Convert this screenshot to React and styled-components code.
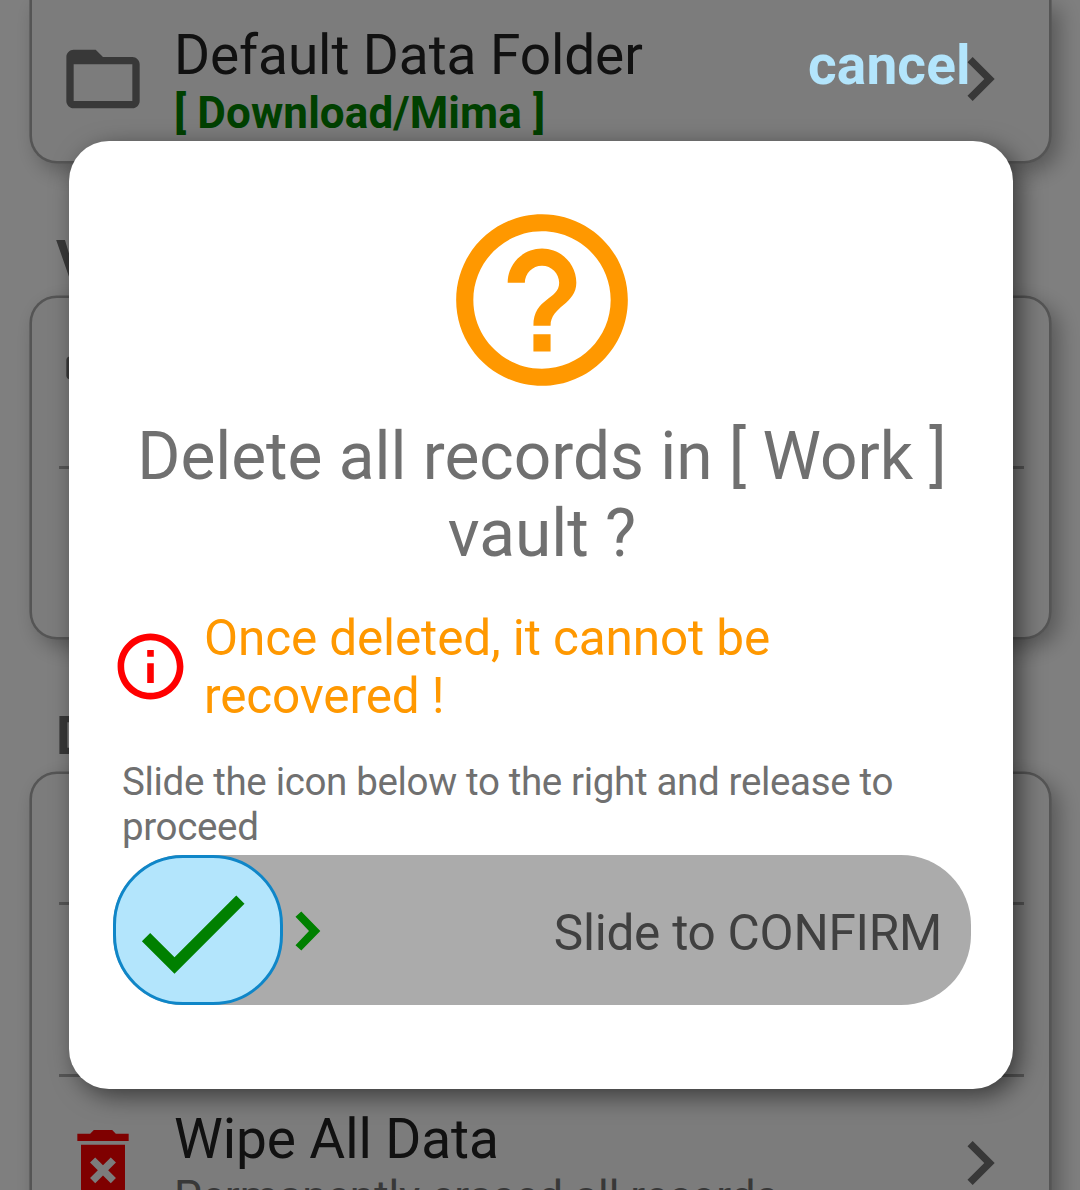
import React from "react";
import styled, { createGlobalStyle } from "styled-components";

const GlobalStyle = createGlobalStyle`
  * { box-sizing: border-box; }
  html, body { margin: 0; height: 100%; overflow: hidden; }
  body { font-family: Roboto, "Liberation Sans", sans-serif; background: #ffffff; }
`;

const Screen = styled.div`
  position: relative;
  height: 1190px;
  width: 1080px;
  overflow: hidden;
  background: #ffffff;
`;

const Settings = styled.main`
  display: flex;
  flex-direction: column;
  padding: 0 29px 0 30px;
`;

const SectionTitle = styled.h2`
  margin: 0;
  height: 133px;
  padding: 65px 0 0 26px;
  font-size: 54px;
  line-height: 63px;
  font-weight: 700;
  color: #707070;
`;

const Card = styled.section`
  display: flex;
  flex-direction: column;
  justify-content: ${(p) => (p.$clippedTop ? "flex-end" : "flex-start")};
  flex: none;
  height: ${(p) => p.$height}px;
  padding-bottom: ${(p) => (p.$clippedTop ? 1 : 0)}px;
  border: 2px solid #aaaaaa;
  border-top-width: ${(p) => (p.$clippedTop ? 0 : 2)}px;
  border-radius: ${(p) => (p.$clippedTop ? "0 0 27px 27px" : "27px")};
  background: #f8f8f8;
  box-shadow: 0 0 0 0.6px #aaaaaa, 8px 8px 22px rgba(0, 0, 0, 0.32);
`;

const Row = styled.div`
  display: flex;
  align-items: center;
  flex: none;
  height: ${(p) => p.$height || 168}px;
  padding: 6px 25px 0 27px;
`;

const Divider = styled.hr`
  flex: none;
  width: 965px;
  height: 3px;
  margin: 0 0 0 27px;
  border: 0;
  background: #aaaaaa;
`;

const RowText = styled.div`
  flex: 1;
  margin: 4px 0 0 27px;
  white-space: nowrap;
`;

const RowTitle = styled.div`
  font-size: 55px;
  line-height: 64px;
  letter-spacing: -0.1px;
  color: #222222;
`;

const RowNote = styled.div`
  font-size: 44px;
  line-height: 52px;
  letter-spacing: ${(p) => (p.$path ? 0.1 : 0)}px;
  font-weight: ${(p) => (p.$path ? 700 : 400)};
  color: ${(p) => (p.$path ? "#008000" : "#707070")};
`;

const Icon = styled.svg`
  display: block;
  flex: none;
  width: ${(p) => p.$size}px;
  height: ${(p) => p.$size}px;
  fill: ${(p) => p.$color || "#707070"};
`;

const Scrim = styled.div`
  position: absolute;
  inset: 0;
  background: rgba(0, 0, 0, 0.5);
`;

const Cancel = styled.button`
  position: absolute;
  top: 33px;
  left: 808px;
  padding: 0;
  border: 0;
  background: none;
  font: 700 55px/64px Roboto, "Liberation Sans", sans-serif;
  letter-spacing: 0.15px;
  color: #b3e5fc;
`;

const Dialog = styled.div`
  position: absolute;
  top: 141px;
  left: 69px;
  width: 944px;
  height: 948px;
  display: flex;
  flex-direction: column;
  padding: 56px 42px 0 44px;
  border-radius: 40px;
  background: #ffffff;
  box-shadow: 7px 7px 24px rgba(0, 0, 0, 0.53);
`;

const DialogIcon = styled.div`
  display: flex;
  justify-content: center;
  height: 221px;
`;

const Question = styled.h1`
  margin: 0 0 37px;
  font-size: 65.8px;
  line-height: 77px;
  font-weight: 400;
  letter-spacing: -0.02px;
  text-align: center;
  color: #707070;
`;

const Warning = styled.div`
  display: flex;
  align-items: center;
  gap: 14px;
  margin: 0 0 34px -2px;
  font-size: 49.5px;
  line-height: 58px;
  letter-spacing: -0.13px;
  color: #ff9800;

  svg { margin-bottom: 2px; }
`;

const Hint = styled.p`
  margin: 0 0 6px;
  padding-left: 9px;
  font-size: 38.5px;
  line-height: 45px;
  letter-spacing: -0.34px;
  color: #707070;
`;

const Track = styled.div`
  display: flex;
  align-items: center;
  height: 150px;
  border-radius: 70px;
  background: #ababab;
`;

const Thumb = styled.div`
  display: flex;
  align-items: center;
  justify-content: center;
  width: 170px;
  height: 150px;
  padding: 5px 11px 0 0;
  margin-left: -0.5px;
  border: 3px solid #0f86c8;
  border-radius: 70px;
  background: #b3e5fc;
`;

const Arrow = styled.svg`
  display: block;
  width: 26px;
  height: 40px;
  margin: 2px 0 0 12.5px;
  fill: #008000;
`;

const TrackLabel = styled.span`
  flex: 1;
  padding: 5px 29px 0 0;
  text-align: right;
  font-size: 49.5px;
  line-height: 58px;
  letter-spacing: -0.25px;
  color: #404040;
`;

const paths = {
  folder:
    "M20 6h-8l-2-2H4c-1.1 0-1.99.9-1.99 2L2 18c0 1.1.9 2 2 2h16c1.1 0 2-.9 2-2V8c0-1.1-.9-2-2-2zm0 12H4V8h16v10z",
  vault: "M3 4.2h18c.6 0 1 .4 1 1v4.2c0 .6-.4 1-1 1H3c-.6 0-1-.4-1-1V5.200c0-.6.4-1 1-1z",
  wipe:
    "M6 19c0 1.1.9 2 2 2h8c1.1 0 2-.9 2-2V7H6v12zm2.46-7.12l1.41-1.41L12 12.59l2.12-2.12 1.41 1.41L13.41 14l2.12 2.12-1.41 1.41L12 15.41l-2.12 2.12-1.41-1.41L10.59 14l-2.13-2.12zM15.5 4l-1-1h-5l-1 1H5v2h14V4z",
  chevron: "M10 6L8.59 7.41 13.17 12l-4.58 4.59L10 18l6-6z",
  help:
    "M11 18h2v-2h-2v2zm1-16C6.48 2 2 6.480 2 12s4.480 10 10 10 10-4.480 10-10S17.520 2 12 2zm0 18c-4.410 0-8-3.590-8-8s3.590-8 8-8 8 3.590 8 8-3.590 8-8 8zm0-14c-2.210 0-4 1.790-4 4h2c0-1.100.9-2 2-2s2 .9 2 2c0 2-3 1.750-3 5h2c0-2.250 3-2.500 3-5 0-2.210-1.790-4-4-4z",
  info:
    "M11 7h2v2h-2zm0 4h2v6h-2zm1-9C6.480 2 2 6.480 2 12s4.480 10 10 10 10-4.480 10-10S17.520 2 12 2zm0 18c-4.410 0-8-3.590-8-8s3.590-8 8-8 8 3.590 8 8-3.590 8-8 8z",
  check: "M9 16.17L4.83 12l-1.42 1.41L9 19 21 7l-1.41-1.41z",
};

function Glyph({ name, size = 88, color }) {
  return (
    <Icon $size={size} $color={color} viewBox="0 0 24 24" aria-hidden="true">
      <path d={paths[name]} />
    </Icon>
  );
}

function SettingRow({ icon, iconColor, title, note, path, height }) {
  return (
    <Row $height={height}>
      <Glyph name={icon} color={iconColor} />
      <RowText>
        <RowTitle>{title}</RowTitle>
        <RowNote $path={path}>{note}</RowNote>
      </RowText>
      <Glyph name="chevron" />
    </Row>
  );
}

export default function App() {
  return (
    <>
      <GlobalStyle />
      <Screen>
        <Settings>
          <Card $height={163} $clippedTop>
            <SettingRow icon="folder" title="Default Data Folder" note="[ Download/Mima ]" path />
          </Card>
          <SectionTitle>V</SectionTitle>
          <Card $height={343}>
            <Row>
              <Glyph name="vault" />
            </Row>
            <Divider />
            <Row $height={167} />
          </Card>
          <SectionTitle>D</SectionTitle>
          <Card $height={500}>
            <Row $height={128} />
            <Divider />
            <Row $height={169} />
            <Divider />
            <SettingRow
              icon="wipe"
              iconColor="#ff0000"
              title="Wipe All Data"
              note="Permanently erased all records"
              height={166}
            />
          </Card>
        </Settings>
        <Scrim />
        <Cancel>cancel</Cancel>
        <Dialog role="dialog">
          <DialogIcon>
            <Glyph name="help" size={206} color="#ff9800" />
          </DialogIcon>
          <Question>Delete all records in [ Work ] vault ?</Question>
          <Warning>
            <Glyph name="info" size={79} color="#ff0000" />
            <span>
              Once deleted, it cannot be
              <br />
              recovered !
            </span>
          </Warning>
          <Hint>Slide the icon below to the right and release to proceed</Hint>
          <Track>
            <Thumb>
              <Glyph name="check" size={140} color="#008000" />
            </Thumb>
            <Arrow viewBox="0 0 26 40" aria-hidden="true">
              <path d="M6.300.500L25.300 20 6.300 39.500.500 34.200 14 20 .500 5.800z" />
            </Arrow>
            <TrackLabel>Slide to CONFIRM</TrackLabel>
          </Track>
        </Dialog>
      </Screen>
    </>
  );
}
